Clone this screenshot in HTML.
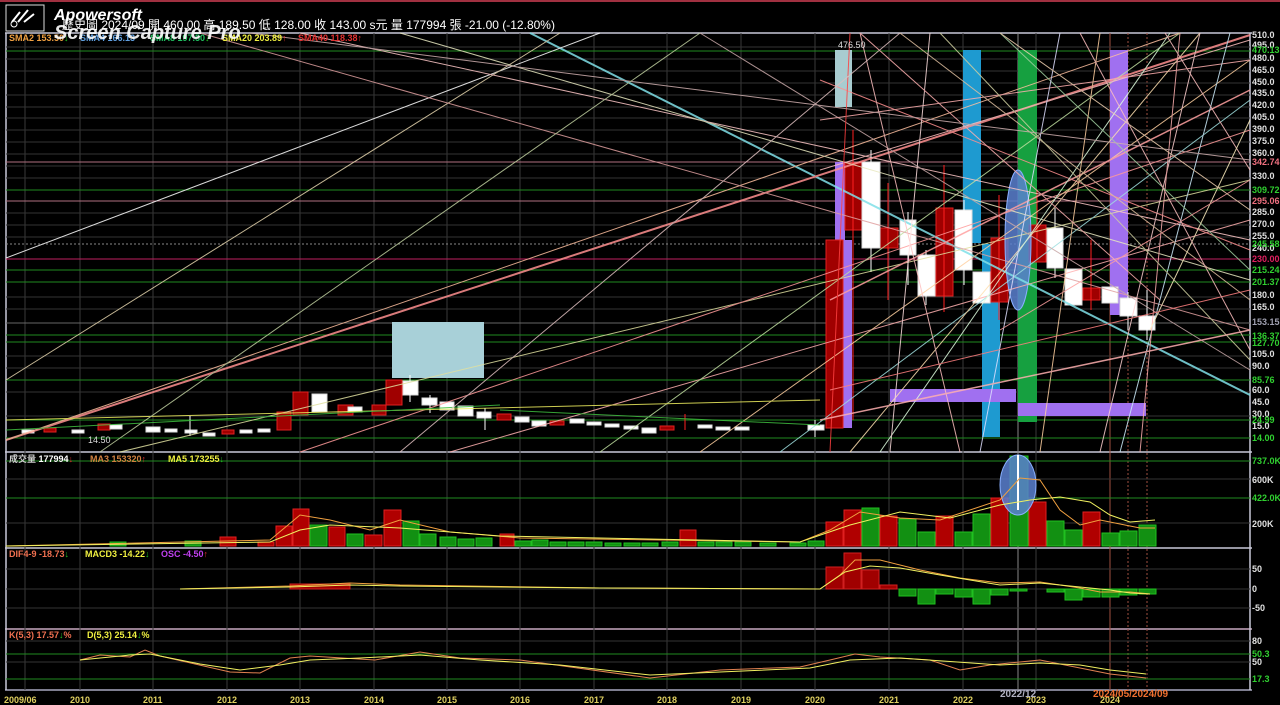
<!DOCTYPE html>
<html><head><meta charset="utf-8"><style>
html,body{margin:0;padding:0;background:#000;width:1280px;height:705px;overflow:hidden}
svg{display:block}
text{font-family:"Liberation Sans","Noto Sans CJK TC",sans-serif;font-size:9px;font-weight:bold}
</style></head><body>
<svg width="1280" height="705" viewBox="0 0 1280 705">
<rect width="1280" height="705" fill="#000"/>
<rect x="0" y="0" width="1280" height="2" fill="#a03040"/>
<g stroke="#c8c8d8" stroke-width="1.5" fill="none">
<line x1="5" y1="33" x2="1252" y2="33"/>
<line x1="5" y1="452" x2="1252" y2="452"/>
<line x1="5" y1="548" x2="1252" y2="548"/>
<line x1="5" y1="629" x2="1252" y2="629" stroke="#c8a8c0"/>
<line x1="5" y1="690" x2="1252" y2="690" stroke="#a8a8c0"/>
<line x1="6" y1="33" x2="6" y2="690"/>
<line x1="1250" y1="33" x2="1250" y2="690"/>
</g>
<g stroke="#3a3a3a" stroke-width="1">
<line x1="25" y1="33" x2="25" y2="690"/><line x1="80" y1="33" x2="80" y2="690"/><line x1="153" y1="33" x2="153" y2="690"/><line x1="227" y1="33" x2="227" y2="690"/><line x1="300" y1="33" x2="300" y2="690"/><line x1="374" y1="33" x2="374" y2="690"/><line x1="447" y1="33" x2="447" y2="690"/><line x1="520" y1="33" x2="520" y2="690"/><line x1="594" y1="33" x2="594" y2="690"/><line x1="667" y1="33" x2="667" y2="690"/><line x1="741" y1="33" x2="741" y2="690"/><line x1="815" y1="33" x2="815" y2="690"/><line x1="889" y1="33" x2="889" y2="690"/><line x1="963" y1="33" x2="963" y2="690"/><line x1="1018" y1="33" x2="1018" y2="690" stroke="#888"/><line x1="1036" y1="33" x2="1036" y2="690"/><line x1="1110" y1="33" x2="1110" y2="690" stroke="#a05040"/><line x1="1128" y1="33" x2="1128" y2="690" stroke="#a05040" stroke-dasharray="2,2"/><line x1="1147" y1="33" x2="1147" y2="690" stroke="#a05040" stroke-dasharray="2,2"/>
</g>
<g stroke="#333" stroke-width="1">
<line x1="6" y1="47" x2="1250" y2="47"/><line x1="6" y1="59" x2="1250" y2="59"/><line x1="6" y1="71" x2="1250" y2="71"/><line x1="6" y1="83" x2="1250" y2="83"/><line x1="6" y1="95" x2="1250" y2="95"/><line x1="6" y1="107" x2="1250" y2="107"/><line x1="6" y1="118" x2="1250" y2="118"/><line x1="6" y1="130" x2="1250" y2="130"/><line x1="6" y1="142" x2="1250" y2="142"/><line x1="6" y1="154" x2="1250" y2="154"/><line x1="6" y1="166" x2="1250" y2="166"/><line x1="6" y1="178" x2="1250" y2="178"/><line x1="6" y1="213" x2="1250" y2="213"/><line x1="6" y1="225" x2="1250" y2="225"/><line x1="6" y1="237" x2="1250" y2="237"/><line x1="6" y1="297" x2="1250" y2="297"/><line x1="6" y1="309" x2="1250" y2="309"/><line x1="6" y1="356" x2="1250" y2="356"/><line x1="6" y1="368" x2="1250" y2="368"/><line x1="6" y1="392" x2="1250" y2="392"/><line x1="6" y1="416" x2="1250" y2="416"/>
<line x1="6" y1="479" x2="1250" y2="479"/><line x1="6" y1="523" x2="1250" y2="523"/>
<line x1="6" y1="569" x2="1250" y2="569"/><line x1="6" y1="589" x2="1250" y2="589"/><line x1="6" y1="608" x2="1250" y2="608"/>
<line x1="6" y1="641" x2="1250" y2="641"/><line x1="6" y1="662" x2="1250" y2="662"/>
</g>
<g stroke="#1f8a1f" stroke-width="1">
<line x1="6" y1="51" x2="1250" y2="51"/><line x1="6" y1="190" x2="1250" y2="190"/><line x1="6" y1="270" x2="1250" y2="270"/><line x1="6" y1="282" x2="1250" y2="282"/><line x1="6" y1="335" x2="1250" y2="335"/><line x1="6" y1="342" x2="1250" y2="342"/><line x1="6" y1="380" x2="1250" y2="380"/><line x1="6" y1="420" x2="1250" y2="420"/><line x1="6" y1="438" x2="1250" y2="438"/>
<line x1="6" y1="461" x2="1250" y2="461"/><line x1="6" y1="498" x2="1250" y2="498"/>
<line x1="6" y1="654" x2="1250" y2="654"/><line x1="6" y1="679" x2="1250" y2="679"/>
</g>
<g stroke-width="1"><line x1="6" y1="162" x2="1250" y2="162" stroke="#b07080"/><line x1="6" y1="201" x2="1250" y2="201" stroke="#b07080"/><line x1="6" y1="259" x2="1250" y2="259" stroke="#c02060"/><line x1="6" y1="323" x2="1250" y2="323" stroke="#666"/><line x1="6" y1="244" x2="1250" y2="244" stroke="#888" stroke-dasharray="2,2"/></g>

<rect x="392" y="322" width="92" height="56" fill="#a8d0d8"/>
<rect x="835" y="50" width="17" height="57" fill="#a8ccd0"/>
<rect x="963" y="50" width="18" height="193" fill="#1e9ad0"/>
<rect x="982" y="244" width="18" height="193" fill="#1e9ad0"/>
<rect x="1018" y="50" width="19" height="372" fill="#16a040"/>
<rect x="1110" y="50" width="18" height="265" fill="#a070f0"/>
<rect x="890" y="389" width="126" height="13" fill="#a070f0"/>
<rect x="1018" y="403" width="128" height="13" fill="#a070f0"/>
<rect x="835" y="162" width="10" height="80" fill="#a070f0"/>
<rect x="843" y="240" width="9" height="188" fill="#a070f0"/>

<g stroke-width="1">
<g fill="#a00000" stroke="#e02020">
<rect x="826" y="240" width="17" height="188"/><rect x="845" y="163" width="17" height="67"/><rect x="880" y="228" width="18" height="20"/><rect x="936" y="208" width="17" height="88"/><rect x="991" y="238" width="17" height="64"/><rect x="1029" y="225" width="17" height="37"/><rect x="1083" y="288" width="17" height="12"/>
<rect x="293" y="392" width="15" height="23"/><rect x="338" y="405" width="15" height="10"/><rect x="372" y="405" width="14" height="10"/><rect x="386" y="380" width="16" height="25"/><rect x="277" y="412" width="14" height="18"/>
<rect x="497" y="414" width="14" height="6"/><rect x="550" y="421" width="14" height="4"/><rect x="660" y="426" width="14" height="4"/><rect x="44" y="428" width="12" height="4"/><rect x="98" y="424" width="12" height="6"/><rect x="222" y="430" width="12" height="4"/>
</g>
<g stroke="#ff2020"><line x1="888" y1="183" x2="888" y2="300"/><line x1="944" y1="165" x2="944" y2="312"/><line x1="999" y1="195" x2="999" y2="320"/><line x1="1037" y1="190" x2="1037" y2="260"/><line x1="1091" y1="240" x2="1091" y2="310"/><line x1="853" y1="130" x2="853" y2="420"/><line x1="685" y1="414" x2="685" y2="430"/></g>
<g fill="#fff" stroke="#ddd">
<rect x="862" y="162" width="18" height="86"/><rect x="900" y="220" width="16" height="35"/><rect x="918" y="255" width="17" height="41"/><rect x="955" y="210" width="17" height="60"/><rect x="973" y="272" width="17" height="31"/><rect x="1047" y="228" width="16" height="40"/><rect x="1065" y="269" width="17" height="36"/><rect x="1102" y="287" width="16" height="16"/><rect x="1120" y="298" width="17" height="18"/><rect x="1139" y="316" width="16" height="14"/>
<rect x="312" y="394" width="15" height="18"/><rect x="348" y="407" width="14" height="5"/><rect x="403" y="381" width="15" height="14"/><rect x="422" y="398" width="15" height="7"/><rect x="440" y="402" width="14" height="8"/><rect x="458" y="406" width="15" height="10"/><rect x="477" y="412" width="14" height="6"/><rect x="515" y="417" width="14" height="5"/><rect x="532" y="421" width="14" height="5"/><rect x="570" y="419" width="14" height="4"/><rect x="587" y="422" width="14" height="3"/><rect x="605" y="424" width="14" height="3"/><rect x="624" y="426" width="14" height="3"/><rect x="642" y="428" width="14" height="5"/><rect x="698" y="425" width="14" height="3"/><rect x="716" y="427" width="14" height="3"/><rect x="735" y="427" width="14" height="3"/><rect x="808" y="425" width="16" height="5"/>
<rect x="22" y="430" width="12" height="3"/><rect x="72" y="430" width="12" height="3"/><rect x="110" y="425" width="12" height="4"/><rect x="146" y="427" width="14" height="5"/><rect x="165" y="429" width="12" height="3"/><rect x="185" y="430" width="12" height="3"/><rect x="203" y="433" width="12" height="3"/><rect x="240" y="430" width="12" height="3"/><rect x="258" y="429" width="12" height="3"/>
</g>
<g stroke="#fff"><line x1="871" y1="150" x2="871" y2="272"/><line x1="908" y1="212" x2="908" y2="285"/><line x1="926" y1="250" x2="926" y2="305"/><line x1="964" y1="200" x2="964" y2="285"/><line x1="1055" y1="208" x2="1055" y2="278"/><line x1="1147" y1="290" x2="1147" y2="340"/><line x1="1128" y1="292" x2="1128" y2="330"/><line x1="410" y1="375" x2="410" y2="402"/><line x1="430" y1="395" x2="430" y2="413"/><line x1="485" y1="408" x2="485" y2="430"/><line x1="190" y1="416" x2="190" y2="436"/><line x1="815" y1="420" x2="815" y2="437"/></g>
</g>

<ellipse cx="1018" cy="240" rx="13" ry="70" fill="#5a80d0" fill-opacity="0.85" stroke="#8ab0ff"/>

<g fill="none" stroke-width="1" opacity="0.85">
<line x1="530" y1="33" x2="1250" y2="395" stroke="#80e0e8" stroke-width="2"/>
<line x1="6" y1="258" x2="600" y2="33" stroke="#ffffff"/>
<line x1="6" y1="440" x2="1250" y2="35" stroke="#ff9090" stroke-width="2"/>
<line x1="6" y1="440" x2="1180" y2="33" stroke="#ffc0a0"/>
<line x1="120" y1="452" x2="1250" y2="180" stroke="#e0e0a0"/>
<line x1="300" y1="452" x2="1250" y2="130" stroke="#ff9a9a"/>
<line x1="450" y1="452" x2="1250" y2="220" stroke="#ffb0b0"/>
<line x1="600" y1="452" x2="1180" y2="33" stroke="#c0e0a0"/>
<line x1="700" y1="452" x2="1250" y2="60" stroke="#ffd0a0"/>
<line x1="780" y1="452" x2="1250" y2="100" stroke="#a0e0e0"/>
<line x1="6" y1="380" x2="560" y2="33" stroke="#e8d8b0"/>
<line x1="200" y1="33" x2="1250" y2="330" stroke="#e0a0a0"/>
<line x1="300" y1="33" x2="1250" y2="240" stroke="#ffc8c8"/>
<line x1="400" y1="33" x2="1250" y2="280" stroke="#e8e8c0"/>
<line x1="700" y1="33" x2="1250" y2="370" stroke="#c8a8a8"/>
<line x1="820" y1="80" x2="1250" y2="250" stroke="#ff9090"/>
<line x1="820" y1="120" x2="1250" y2="60" stroke="#ffb0b0"/>
<line x1="820" y1="170" x2="1250" y2="40" stroke="#ffc0c0"/>
<line x1="830" y1="300" x2="1250" y2="90" stroke="#ffa0a0" stroke-width="1.5"/>
<line x1="850" y1="452" x2="1200" y2="33" stroke="#ffe0b0"/>
<line x1="880" y1="452" x2="1170" y2="33" stroke="#e0ffe0"/>
<line x1="1100" y1="452" x2="1200" y2="33" stroke="#ffd0d0"/>
<line x1="1120" y1="452" x2="1230" y2="33" stroke="#d0f0ff"/>
<line x1="1140" y1="452" x2="1180" y2="33" stroke="#ffb0b0"/>
<line x1="900" y1="33" x2="1250" y2="300" stroke="#e0c0a0"/>
<line x1="940" y1="33" x2="1250" y2="360" stroke="#d0d0a0"/>
<line x1="1000" y1="33" x2="1250" y2="270" stroke="#a0d0a0"/>
<line x1="860" y1="33" x2="960" y2="452" stroke="#ffc0c0"/>
<line x1="930" y1="33" x2="890" y2="452" stroke="#ffe0e0"/>
<line x1="1060" y1="33" x2="980" y2="452" stroke="#e0e0ff"/>
<line x1="1100" y1="33" x2="1040" y2="452" stroke="#ffd0a0"/>
<line x1="860" y1="33" x2="1160" y2="300" stroke="#ffb0b0"/>
<line x1="850" y1="33" x2="830" y2="452" stroke="#ff4040"/>
<line x1="1165" y1="33" x2="1250" y2="170" stroke="#ffc0c0"/>
<line x1="1150" y1="330" x2="1250" y2="120" stroke="#fff0c0"/>
<line x1="1000" y1="330" x2="1250" y2="180" stroke="#ffa0a0"/>
<line x1="830" y1="390" x2="1250" y2="290" stroke="#ff8080"/>
<line x1="820" y1="420" x2="1250" y2="330" stroke="#ffb0b0" stroke-width="1.5"/>
<line x1="6" y1="420" x2="820" y2="400" stroke="#f0f060"/>
<line x1="6" y1="430" x2="300" y2="415" stroke="#40c040"/>
<line x1="300" y1="415" x2="500" y2="405" stroke="#40c040"/>
<line x1="500" y1="410" x2="820" y2="425" stroke="#40c040"/>
<line x1="250" y1="33" x2="1250" y2="160" stroke="#d0b0b0"/>
<line x1="100" y1="452" x2="700" y2="33" stroke="#c0d0a0"/>
<line x1="400" y1="452" x2="900" y2="33" stroke="#e0c0c0"/>
<line x1="1000" y1="33" x2="1250" y2="210" stroke="#f0d0b0"/>
<line x1="1080" y1="33" x2="1250" y2="350" stroke="#ffc0c0"/>
</g>

<g stroke-width="1">
<g fill="#b00000" stroke="#e02020"><rect x="826" y="522" width="17" height="24"/><rect x="844" y="510" width="17" height="36"/><rect x="880" y="516" width="17" height="30"/><rect x="936" y="516" width="17" height="30"/><rect x="991" y="498" width="17" height="48"/><rect x="1029" y="502" width="17" height="44"/><rect x="1083" y="512" width="17" height="34"/><rect x="276" y="526" width="16" height="20"/><rect x="293" y="509" width="16" height="37"/><rect x="329" y="527" width="16" height="19"/><rect x="365" y="535" width="17" height="11"/><rect x="384" y="510" width="17" height="36"/><rect x="220" y="537" width="16" height="9"/><rect x="258" y="542" width="16" height="4"/><rect x="680" y="530" width="16" height="16"/><rect x="500" y="534" width="14" height="12"/></g>
<g fill="#129012" stroke="#20c020"><rect x="862" y="508" width="17" height="38"/><rect x="899" y="519" width="17" height="27"/><rect x="918" y="532" width="17" height="14"/><rect x="955" y="532" width="17" height="14"/><rect x="973" y="514" width="17" height="32"/><rect x="1010" y="456" width="18" height="90"/><rect x="1047" y="521" width="17" height="25"/><rect x="1065" y="530" width="17" height="16"/><rect x="1102" y="533" width="17" height="13"/><rect x="1120" y="531" width="17" height="15"/><rect x="1139" y="525" width="17" height="21"/><rect x="310" y="525" width="17" height="21"/><rect x="347" y="534" width="16" height="12"/><rect x="403" y="521" width="16" height="25"/><rect x="420" y="534" width="16" height="12"/><rect x="440" y="537" width="16" height="9"/><rect x="458" y="539" width="16" height="7"/><rect x="476" y="538" width="16" height="8"/><rect x="515" y="541" width="16" height="5"/><rect x="532" y="540" width="16" height="6"/><rect x="550" y="542" width="16" height="4"/><rect x="568" y="542" width="16" height="4"/><rect x="586" y="542" width="16" height="4"/><rect x="605" y="543" width="16" height="3"/><rect x="624" y="543" width="16" height="3"/><rect x="642" y="543" width="16" height="3"/><rect x="662" y="542" width="16" height="4"/><rect x="698" y="542" width="16" height="4"/><rect x="716" y="542" width="16" height="4"/><rect x="735" y="542" width="16" height="4"/><rect x="760" y="543" width="16" height="3"/><rect x="790" y="543" width="16" height="3"/><rect x="808" y="541" width="16" height="5"/><rect x="110" y="542" width="16" height="4"/><rect x="185" y="541" width="16" height="5"/></g>
</g>
<ellipse cx="1018" cy="485" rx="18" ry="30" fill="#5a80d0" fill-opacity="0.85" stroke="#8ab0ff"/>
<line x1="1018" y1="455" x2="1018" y2="510" stroke="#fff" stroke-width="2"/>
<polyline fill="none" stroke="#f0a040" points="6,546 270,540 300,515 330,520 370,530 400,520 450,532 520,538 800,542 830,530 860,512 900,518 940,520 1000,500 1020,478 1040,480 1060,510 1080,525 1100,520 1140,528 1155,528"/>
<polyline fill="none" stroke="#f0f060" points="6,546 270,542 300,530 330,525 400,528 500,536 800,542 850,525 900,512 950,518 1000,505 1030,500 1060,497 1090,502 1110,515 1130,522 1155,520"/>

<g fill="#a00000" stroke="#d02020"><rect x="826" y="567" width="17" height="22"/><rect x="844" y="553" width="17" height="36"/><rect x="862" y="570" width="17" height="19"/><rect x="880" y="585" width="17" height="4"/><rect x="290" y="584" width="60" height="5"/></g>
<g fill="#129012" stroke="#20c020"><rect x="899" y="589" width="17" height="7"/><rect x="918" y="589" width="17" height="15"/><rect x="936" y="589" width="17" height="5"/><rect x="955" y="589" width="17" height="8"/><rect x="973" y="589" width="17" height="15"/><rect x="991" y="589" width="17" height="6"/><rect x="1010" y="589" width="17" height="2"/><rect x="1047" y="589" width="17" height="3"/><rect x="1065" y="589" width="17" height="11"/><rect x="1083" y="589" width="17" height="8"/><rect x="1102" y="589" width="17" height="8"/><rect x="1120" y="589" width="17" height="6"/><rect x="1139" y="589" width="17" height="5"/></g>
<polyline fill="none" stroke="#f0a040" points="180,589 290,586 350,583 400,585 600,588 820,589 840,575 855,560 880,560 920,570 960,578 1000,583 1040,582 1080,588 1100,592 1130,592 1150,594"/>
<polyline fill="none" stroke="#f0f060" points="180,589 290,587 350,585 400,586 600,588 820,589 845,572 870,566 900,568 940,575 1000,585 1040,583 1080,587 1110,590 1130,593 1150,594"/>

<polyline fill="none" stroke="#e08050" points="80,660 100,655 130,657 145,650 160,656 230,672 260,673 290,658 310,656 375,660 420,652 460,658 520,660 650,678 720,670 800,667 830,660 855,654 880,657 930,660 960,670 990,665 1040,660 1080,668 1110,674 1146,678"/>
<polyline fill="none" stroke="#f0f060" points="80,660 130,655 150,654 200,664 240,670 280,665 310,660 360,658 420,655 480,660 560,665 650,675 720,672 810,668 850,660 900,658 1000,665 1040,663 1080,665 1110,670 1146,674"/>

<g fill="#e0e0e0">
<text x="1252" y="38">510.0</text><text x="1252" y="48">495.0</text><text x="1252" y="61">480.0</text><text x="1252" y="73">465.0</text><text x="1252" y="85">450.0</text><text x="1252" y="96">435.0</text><text x="1252" y="108">420.0</text><text x="1252" y="120">405.0</text><text x="1252" y="132">390.0</text><text x="1252" y="144">375.0</text><text x="1252" y="156">360.0</text><text x="1252" y="179">330.0</text><text x="1252" y="215">285.0</text><text x="1252" y="227">270.0</text><text x="1252" y="239">255.0</text><text x="1252" y="251">240.0</text><text x="1252" y="298">180.0</text><text x="1252" y="310">165.0</text><text x="1252" y="357">105.0</text><text x="1252" y="369">90.0</text><text x="1252" y="393">60.0</text><text x="1252" y="405">45.0</text><text x="1252" y="417">30.0</text><text x="1252" y="429">15.0</text>
<text x="1252" y="483">600K</text><text x="1252" y="527">200K</text><text x="1252" y="572">50</text><text x="1252" y="592">0</text><text x="1252" y="611">-50</text><text x="1252" y="644">80</text><text x="1252" y="665">50</text>
</g>
<g fill="#30d030"><text x="1252" y="53">470.13</text><text x="1252" y="193">309.72</text><text x="1252" y="247">245.58</text><text x="1252" y="273">215.24</text><text x="1252" y="285">201.37</text><text x="1252" y="339">136.37</text><text x="1252" y="346">127.70</text><text x="1252" y="383">85.76</text><text x="1252" y="423">24.99</text><text x="1252" y="441">14.00</text><text x="1252" y="464">737.0K</text><text x="1252" y="501">422.0K</text><text x="1252" y="657">50.3</text><text x="1252" y="682">17.3</text></g>
<g fill="#f07080"><text x="1252" y="165">342.74</text><text x="1252" y="204">295.06</text><text x="1252" y="262" fill="#e02060">230.00</text></g>
<text x="1252" y="325" fill="#a0a0b0">153.15</text>

<text x="838" y="48" fill="#ddd" style="font-weight:normal">476.50</text>
<text x="88" y="443" fill="#ddd" style="font-weight:normal">14.50</text>
<g>
<text x="9" y="462" fill="#ccc">成交量 <tspan fill="#fff">177994</tspan><tspan fill="#e03030">↓</tspan></text>
<text x="90" y="462" fill="#d08040">MA3 153320<tspan fill="#e03030">↑</tspan></text>
<text x="168" y="462" fill="#f0f040">MA5 173255<tspan fill="#20c020">↓</tspan></text>
<text x="9" y="557" fill="#f07050">DIF4-9 -18.73<tspan fill="#20c020">↓</tspan></text>
<text x="85" y="557" fill="#f0f040">MACD3 -14.22<tspan fill="#20c020">↓</tspan></text>
<text x="161" y="557" fill="#c040f0">OSC -4.50<tspan fill="#e03030">↑</tspan></text>
<text x="9" y="638" fill="#f07050">K(5,3) 17.57<tspan fill="#20c020">↓</tspan>%</text>
<text x="87" y="638" fill="#f0f040">D(5,3) 25.14<tspan fill="#20c020">↓</tspan>%</text>
<text x="9" y="41" fill="#f0a040">SMA2 153.50<tspan fill="#20c020">↓</tspan></text>
<text x="80" y="41" fill="#60a0e0">SMA4 166.13</text>
<text x="150" y="41" fill="#20c060">SMA8 197.50<tspan fill="#20c020">↓</tspan></text>
<text x="222" y="41" fill="#f0f040">SMA20 203.89<tspan fill="#e03030">↑</tspan></text>
<text x="298" y="41" fill="#e03030">SMA40 118.38<tspan fill="#e03030">↑</tspan></text>
</g>
<text x="62" y="29" fill="#fff" style="font-size:12px;font-weight:normal">歷史圖 2024/09 開 460.00 高 189.50 低 128.00 收 143.00 s元 量 177994 張 -21.00 (-12.80%)</text>
<rect x="6" y="5" width="38" height="26" fill="none" stroke="#ddd"/>
<path d="M12 22 L20 12 M18 22 L28 10 M24 22 L34 14" stroke="#fff" stroke-width="2" fill="none"/>
<circle cx="14" cy="24" r="3" fill="none" stroke="#fff"/>
<text x="54" y="20" fill="#fff" style="font-size:16px;font-style:italic">Apowersoft</text>
<text x="54" y="39" fill="#fff" style="font-size:20px;font-style:italic" opacity="0.9">Screen Capture Pro</text>

<g fill="#e0d060" style="font-size:10px">
<text x="4" y="703">2009/06</text><text x="70" y="703">2010</text><text x="143" y="703">2011</text><text x="217" y="703">2012</text><text x="290" y="703">2013</text><text x="364" y="703">2014</text><text x="437" y="703">2015</text><text x="510" y="703">2016</text><text x="584" y="703">2017</text><text x="657" y="703">2018</text><text x="731" y="703">2019</text><text x="805" y="703">2020</text><text x="879" y="703">2021</text><text x="953" y="703">2022</text><text x="1026" y="703">2023</text><text x="1100" y="703">2024</text>
</g>
<text x="1000" y="697" fill="#b0b0c0" style="font-size:10px">2022/12</text>
<text x="1093" y="697" fill="#f07030" style="font-size:10px">2024/05/2024/09</text>
</svg>
</body></html>
